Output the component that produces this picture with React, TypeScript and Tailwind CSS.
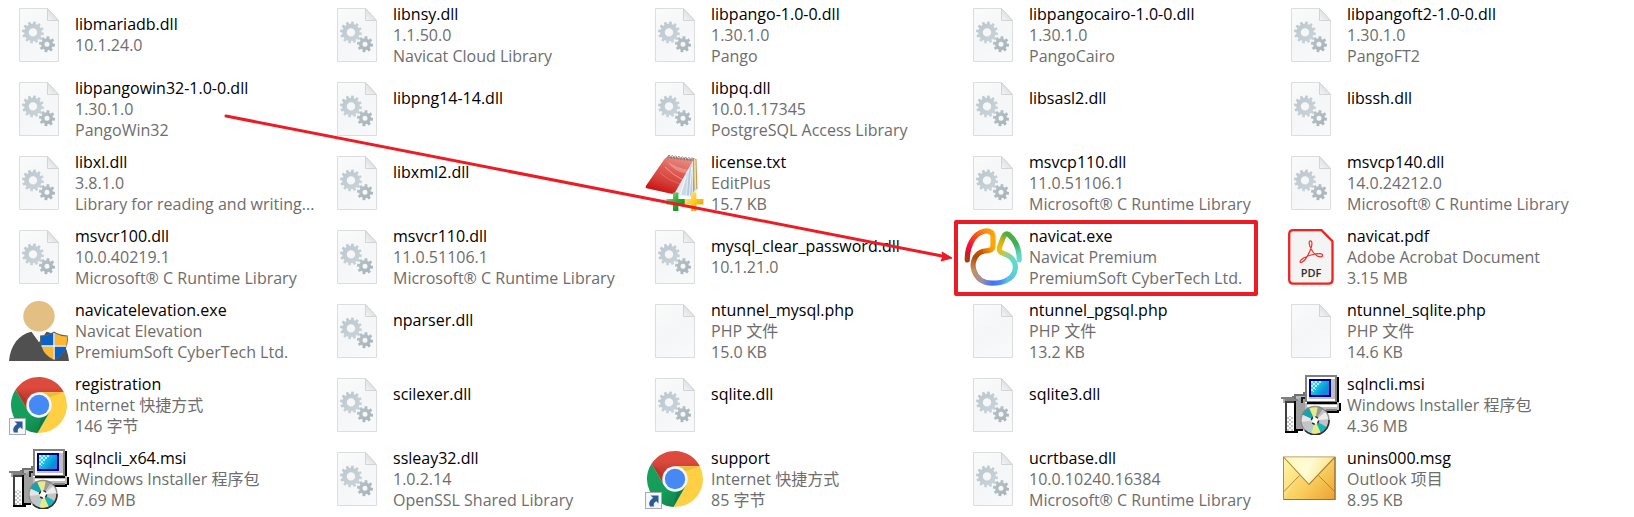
import type { ReactNode } from "react";

type IconKind = "dll" | "page" | "license" | "navicat" | "pdf" | "user" | "chrome" | "msi" | "mail";

interface FileEntry {
  name: string;
  icon: IconKind;
  meta?: string[];
  marked?: boolean;
}

const files: FileEntry[] = [
  { name: "libmariadb.dll", icon: "dll", meta: ["10.1.24.0"] },
  { name: "libnsy.dll", icon: "dll", meta: ["1.1.50.0", "Navicat Cloud Library"] },
  { name: "libpango-1.0-0.dll", icon: "dll", meta: ["1.30.1.0", "Pango"] },
  { name: "libpangocairo-1.0-0.dll", icon: "dll", meta: ["1.30.1.0", "PangoCairo"] },
  { name: "libpangoft2-1.0-0.dll", icon: "dll", meta: ["1.30.1.0", "PangoFT2"] },
  { name: "libpangowin32-1.0-0.dll", icon: "dll", meta: ["1.30.1.0", "PangoWin32"] },
  { name: "libpng14-14.dll", icon: "dll" },
  { name: "libpq.dll", icon: "dll", meta: ["10.0.1.17345", "PostgreSQL Access Library"] },
  { name: "libsasl2.dll", icon: "dll" },
  { name: "libssh.dll", icon: "dll" },
  { name: "libxl.dll", icon: "dll", meta: ["3.8.1.0", "Library for reading and writing..."] },
  { name: "libxml2.dll", icon: "dll" },
  { name: "license.txt", icon: "license", meta: ["EditPlus", "15.7 KB"] },
  { name: "msvcp110.dll", icon: "dll", meta: ["11.0.51106.1", "Microsoft® C Runtime Library"] },
  { name: "msvcp140.dll", icon: "dll", meta: ["14.0.24212.0", "Microsoft® C Runtime Library"] },
  { name: "msvcr100.dll", icon: "dll", meta: ["10.0.40219.1", "Microsoft® C Runtime Library"] },
  { name: "msvcr110.dll", icon: "dll", meta: ["11.0.51106.1", "Microsoft® C Runtime Library"] },
  { name: "mysql_clear_password.dll", icon: "dll", meta: ["10.1.21.0"] },
  { name: "navicat.exe", icon: "navicat", meta: ["Navicat Premium", "PremiumSoft CyberTech Ltd."], marked: true },
  { name: "navicat.pdf", icon: "pdf", meta: ["Adobe Acrobat Document", "3.15 MB"] },
  { name: "navicatelevation.exe", icon: "user", meta: ["Navicat Elevation", "PremiumSoft CyberTech Ltd."] },
  { name: "nparser.dll", icon: "dll" },
  { name: "ntunnel_mysql.php", icon: "page", meta: ["PHP 文件", "15.0 KB"] },
  { name: "ntunnel_pgsql.php", icon: "page", meta: ["PHP 文件", "13.2 KB"] },
  { name: "ntunnel_sqlite.php", icon: "page", meta: ["PHP 文件", "14.6 KB"] },
  { name: "registration", icon: "chrome", meta: ["Internet 快捷方式", "146 字节"] },
  { name: "scilexer.dll", icon: "dll" },
  { name: "sqlite.dll", icon: "dll" },
  { name: "sqlite3.dll", icon: "dll" },
  { name: "sqlncli.msi", icon: "msi", meta: ["Windows Installer 程序包", "4.36 MB"] },
  { name: "sqlncli_x64.msi", icon: "msi", meta: ["Windows Installer 程序包", "7.69 MB"] },
  { name: "ssleay32.dll", icon: "dll", meta: ["1.0.2.14", "OpenSSL Shared Library"] },
  { name: "support", icon: "chrome", meta: ["Internet 快捷方式", "85 字节"] },
  { name: "ucrtbase.dll", icon: "dll", meta: ["10.0.10240.16384", "Microsoft® C Runtime Library"] },
  { name: "unins000.msg", icon: "mail", meta: ["Outlook 项目", "8.95 KB"] },
];

function gearPath(cx: number, cy: number, outer: number, body: number, hole: number, teeth: number) {
  const points: string[] = [];
  const step = (Math.PI * 2) / teeth;
  const at = (angle: number, radius: number) =>
    `${(cx + Math.cos(angle) * radius).toFixed(2)} ${(cy + Math.sin(angle) * radius).toFixed(2)}`;
  for (let i = 0; i < teeth; i++) {
    const a = i * step - Math.PI / 2 + 0.15;
    points.push(at(a - step * 0.32, body), at(a - step * 0.22, outer), at(a + step * 0.22, outer), at(a + step * 0.32, body));
  }
  return `M${points.join("L")}ZM${cx - hole} ${cy}a${hole} ${hole} 0 1 0 ${hole * 2} 0a${hole} ${hole} 0 1 0 ${-hole * 2} 0Z`;
}

const bigGear = gearPath(24, 27.4, 11, 8.7, 4.2, 12);
const smallGear = gearPath(38, 39.2, 8.1, 5.9, 2.5, 8);

function PageShape() {
  return (
    <>
      <path d="M10.5 3.5H38.5L49.5 15.5V56.5H10.5Z" fill="url(#page-fill)" stroke="#dcdddd" />
      <path d="M38.5 3.5V15.5H49.5Z" fill="url(#fold-fill)" stroke="#d2d4d5" strokeLinejoin="round" />
    </>
  );
}

function DllIcon() {
  return (
    <>
      <PageShape />
      <path d={bigGear} fill="url(#gear-light)" fillRule="evenodd" />
      <path d={smallGear} fill="url(#gear-dark)" fillRule="evenodd" />
    </>
  );
}

function LicenseIcon() {
  return (
    <>
      <path d="M3 35L30 41.5L46 44L52 38L46 36Z" fill="#d9dcdf" opacity="0.6" />
      <path d="M47.5 5L51.5 6L52.5 36L49 37.5Z" fill="#c79a4b" />
      <path d="M49 6L50.5 6.4L51.3 36.4L49.6 37Z" fill="#f3e2b8" />
      <path d="M47 6L49.5 37L45 43L30 40Z" fill="#dde8f1" />
      <path d="M46.5 11L47 42.5L42 42L44 18Z" fill="#b4c9d9" />
      <path d="M43 17L40.5 42L36.5 41.5Z" fill="#c8d8e5" />
      <path d="M48 8L49.5 37L48 40Z" fill="#8fa5b5" />
      <path d="M46.5 14L44.5 42.5M41 23L35.5 41" stroke="#ffffff" strokeWidth="0.8" />
      <path d="M22.3 3.5L48 6.5Q47 10 45 13L30 39.5Q29 41.2 26.5 40.7L1.5 35.3Q0 34.8 0.8 33L19.5 6Z" fill="url(#book-red)" />
      <path d="M22 8Q29 19 43 21L45 17Q31 15 22 8Z" fill="#ffffff" opacity="0.25" />
      <path d="M20 14Q28 22 38 27" stroke="#ffffff" strokeWidth="0.8" opacity="0.5" fill="none" />
      <path d="M15 20Q23 27 35 31" stroke="#ffffff" strokeWidth="0.5" opacity="0.4" fill="none" />
      <path
        d="M23 5.5V3q1-2 2 0v2M26.3 5.9V3.4q1-2 2 0v2M29.6 6.3V3.8q1-2 2 0v2M32.9 6.7V4.2q1-2 2 0v2M36.2 7.1V4.6q1-2 2 0v2M39.5 7.5V5q1-2 2 0v2M42.8 7.9V5.4q1-2 2 0v2M46 8V5.7q1-2 2 0v2"
        fill="none"
        stroke="#77716c"
        strokeWidth="0.9"
      />
      <path d="M28 39.5h5.4v6.6h6.5v5.3h-6.5V58H28v-6.6h-6.6v-5.3H28Z" fill="url(#plus-green)" />
      <path d="M46 39.5h5.4v6.6h7V51.4h-7V58H46v-6.6h-6.2v-5.3H46Z" fill="url(#plus-gold)" />
    </>
  );
}

function NavicatIcon() {
  return (
    <g fill="none" strokeWidth="5.2">
      <path d="M44.5 52.8C51 49 54 42 51.5 35.5C49.5 30 45 28 41 26.7" stroke="url(#nav-teal)" />
      <path d="M41.3 26.8C36.5 25.6 35.6 23.3 36.5 20L40 11C42 6 44.3 6.2 46.5 8.3" stroke="url(#nav-yellow)" />
      <path d="M46.2 8C52.5 13.5 56.5 21.5 56.2 33" stroke="url(#nav-green)" strokeLinecap="round" />
      <path d="M11 43.5C13.5 51 19.5 56 29 56.2C35.5 56.2 40.5 55.3 44.8 52.6" stroke="url(#nav-blue)" />
      <path d="M20.5 24.2C12.5 26 8 35.5 11.1 43.8" stroke="url(#nav-brown)" />
      <path d="M28 5.2Q30 6.8 30 10V18.5C30 21.5 29 22.8 26.5 23.2L20.2 24.3" stroke="url(#nav-orange)" />
      <path d="M4.3 33C4 20 10 6.8 21 4.2Q25.8 3.3 28.3 5.5" stroke="url(#nav-red)" strokeLinecap="round" />
    </g>
  );
}

function PdfIcon() {
  return (
    <>
      <path
        d="M12.2 3.2H40.5L51.5 14.2V52.5Q51.5 56.6 47.4 56.6H12.2Q8.2 56.6 8.2 52.5V7.2Q8.2 3.2 12.2 3.2Z"
        fill="#f4f4f4"
        stroke="#f4221b"
        strokeWidth="2.3"
      />
      <path
        d="M29.3 13.9C27.4 13.9 28 18.2 30.2 22.2C32.5 26.2 36.5 29.8 39.6 29.8C42.5 29.8 42.3 26.7 38.8 26.7C34 26.7 26 28.6 21.8 31.6C18.3 34 18.6 35.8 20.2 35.5C23.6 35 28.6 26.2 30.3 20.2C31.4 16.2 31 13.9 29.3 13.9Z"
        fill="none"
        stroke="#f0302a"
        strokeWidth="1.2"
      />
      <text x="30" y="50" textAnchor="middle" className="fill-[#2c2c2c] font-['Open_Sans'] text-[11px] font-semibold">
        PDF
      </text>
    </>
  );
}

function UserIcon() {
  return (
    <>
      <path d="M0 60C1.5 44 10 33.5 22.5 30.8L30 41L37.5 30.8C50 33.5 58.5 44 60 60Z" fill="#505050" />
      <path d="M23 27H37V31L30 41L23 31Z" fill="#f7f7f7" />
      <ellipse cx="30" cy="15.2" rx="15.7" ry="15.2" fill="#e3bf83" />
      <path d="M45 30.5Q50 34 58.8 34.5Q60 52 45 59.5Q30 52 31 34.5Q40 34 45 30.5Z" fill="#5b6670" />
      <path d="M44.2 32.2V44.2H32.6Q31.8 40 32 35.5Q39 35.2 44.2 32.2Z" fill="#0a63c4" />
      <path d="M45.8 32.2V44.2H57.4Q58.2 40 58 35.5Q51 35.2 45.8 32.2Z" fill="#fdb731" />
      <path d="M44.2 45.8V58.2Q35 54 32.9 45.8Z" fill="#fdb731" />
      <path d="M45.8 45.8V58.2Q55 54 57.1 45.8Z" fill="#0a63c4" />
      <path d="M45 32V58.5M32.5 45H57.5" stroke="#f2f4f6" strokeWidth="1.5" />
    </>
  );
}

function ChromeIcon() {
  return (
    <>
      <path d="M6.5 14.7A28 28 0 0 1 54.9 17.3H30L19 36.3Z" fill="url(#chrome-red)" />
      <path d="M54.9 17.3A28 28 0 0 1 28.5 58L41 36.3L30 17.3Z" fill="#ffcf44" />
      <path d="M28.5 58A28 28 0 0 1 6.5 14.7L19 36.3H41Z" fill="url(#chrome-green)" />
      <path d="M30 17.3H54.9L41 22Z" fill="#c99526" opacity="0.35" />
      <path d="M6.5 14.7L19 36.3L17.5 24Z" fill="#8f2b1f" opacity="0.3" />
      <path d="M41 36.3L28.5 58L32 42Z" fill="#0a5a34" opacity="0.3" />
      <circle cx="30" cy="30" r="12.7" fill="#f4f6f8" />
      <circle cx="30" cy="30" r="10.2" fill="#4688f4" />
      <rect x="0.5" y="43.5" width="16" height="16" fill="#f5f6f7" stroke="#a9abad" />
      <path d="M5.5 46.5H13.5V54.5L11.3 52.2C9 53.2 8.3 55 9 57.5H5C3.2 54.3 4.8 51 8.2 49.1Z" fill="#2b5b96" />
    </>
  );
}

function MsiIcon() {
  return (
    <>
      <g shapeRendering="crispEdges">
        {/* carton */}
        <path d="M13 20H24V54H11V25Z" fill="#a0a0a0" />
        <path d="M13 19H22V17H26V23H18V25H11V21H13Z" fill="#707070" />
        <path d="M15 21H26V23H18V25H15Z" fill="#b8b8b8" />
        <path d="M0 22H13V24H17V26H4V24H0Z" fill="#808080" />
        <path d="M2 24H4V26H15V28H2Z" fill="#a8a8a8" />
        <rect x="4" y="26" width="10" height="32" fill="#ffffff" />
        <path d="M4 26H13V28H6V58H4Z" fill="#404040" />
        <rect x="6" y="41" width="6" height="15" fill="url(#msi-dither)" />
        <path d="M13 26H15V58H4V56H13Z" fill="#000000" />
        <path d="M15 54H22V56H17V58H15Z" fill="#000000" />
        <path d="M20 22H24V24H22V28H20Z" fill="#202020" />
        {/* computer */}
        <path d="M24 28H60V36H58V38H45V36H24Z" fill="#000000" />
        <path d="M24 28H56V26H58V35H24Z" fill="#bcbcbc" />
        <path d="M26 30H56V32H26Z" fill="#ffffff" />
        <path d="M45 34H56V36H45Z" fill="#808080" />
        <path d="M26 2H58V27H56V29H26Z" fill="#000000" />
        <rect x="24" y="0" width="32" height="27" fill="#808080" />
        <rect x="26" y="2" width="28" height="24" fill="#ffffff" />
        <path d="M28 22H50V4H54V24H28Z" fill="#c0c0c0" />
        <rect x="28" y="4" width="22" height="18" fill="#000080" />
        <rect x="30" y="6" width="18" height="14" fill="url(#msi-screen)" />
        <path d="M30 6H41L32 18H30Z" fill="url(#msi-dither-cyan)" />
      </g>
      {/* disc */}
      <circle cx="34" cy="45.5" r="14.3" fill="#c4c4c4" />
      <path d="M34 45.5L21 39.5A14.3 14.3 0 0 1 28 32.5Z" fill="#13a5ae" />
      <path d="M34 45.5L28 32.5A14.3 14.3 0 0 1 37 31.5Z" fill="#e9e98a" />
      <path d="M34 45.5L37 31.5A14.3 14.3 0 0 1 42 33.7Z" fill="#9a9a9a" />
      <path d="M34 45.5L45 36.5A14.3 14.3 0 0 1 48.2 44Z" fill="#ededed" />
      <path d="M34 45.5L46.5 52.5A14.3 14.3 0 0 1 40 58.5Z" fill="#13b5bd" />
      <path d="M34 45.5L40 58.5A14.3 14.3 0 0 1 30 59.2Z" fill="#e9e98a" />
      <path d="M34 45.5L30 59.2A14.3 14.3 0 0 1 26 57.3Z" fill="#9fd7d9" />
      <path d="M34 45.5L19.8 47A14.3 14.3 0 0 1 21 39.5Z" fill="#e4e4e4" />
      <circle cx="34" cy="45.5" r="14" fill="none" stroke="#808080" strokeWidth="1.4" opacity="0.8" />
      <path d="M48 45A14 14 0 0 1 24 55.5" fill="none" stroke="#303030" strokeWidth="1.6" />
      <circle cx="34" cy="45.5" r="3.6" fill="#ffffff" stroke="#222222" strokeWidth="1.4" strokeDasharray="3 2.6" />
    </>
  );
}

function MailIcon() {
  return (
    <>
      <rect x="2.5" y="8" width="51.5" height="42.5" fill="url(#mail-fill)" stroke="#b08c46" />
      <path d="M3 49.5L18.5 26.5L28 36L37.5 26.5L53.5 49.5Z" fill="#f0ad38" opacity="0.15" />
      <path d="M3 42.5L18.5 26.5M53.5 42.5L37.5 26.5" stroke="#a87f3a" strokeWidth="0.9" />
      <path d="M3 8.5L28 35.5L53.5 8.5Z" fill="url(#mail-flap)" />
      <path d="M3 8.5L28 35.5L53.5 8.5" fill="none" stroke="#ab8236" strokeWidth="1.1" />
      <path d="M3 50.5H54V8" fill="none" stroke="#96723a" strokeWidth="1.2" />
    </>
  );
}

const drawings: Record<IconKind, () => ReactNode> = {
  dll: DllIcon,
  page: PageShape,
  license: LicenseIcon,
  navicat: NavicatIcon,
  pdf: PdfIcon,
  user: UserIcon,
  chrome: ChromeIcon,
  msi: MsiIcon,
  mail: MailIcon,
};

function FileIcon({ kind }: { kind: IconKind }) {
  const Drawing = drawings[kind];
  return (
    <svg viewBox="0 0 60 60" className="size-15 shrink-0" aria-hidden="true">
      <Drawing />
    </svg>
  );
}

type Stop = [number, string];

function Gradient({ id, from, to, stops }: { id: string; from: [number, number]; to: [number, number]; stops: Stop[] }) {
  return (
    <linearGradient id={id} gradientUnits="userSpaceOnUse" x1={from[0]} y1={from[1]} x2={to[0]} y2={to[1]}>
      {stops.map(([offset, color]) => (
        <stop key={offset} offset={offset} stopColor={color} />
      ))}
    </linearGradient>
  );
}

function SharedPaint() {
  return (
    <svg className="absolute size-0" aria-hidden="true">
      <defs>
        <Gradient id="page-fill" from={[10, 3]} to={[50, 57]} stops={[[0, "#fafbfb"], [0.5, "#f4f6f7"], [1, "#f9fafb"]]} />
        <Gradient id="fold-fill" from={[38, 15]} to={[44, 9]} stops={[[0, "#f6f6f6"], [1, "#dfe1e2"]]} />
        <Gradient id="gear-light" from={[16, 18]} to={[32, 38]} stops={[[0, "#bcc7cf"], [1, "#cbd4da"]]} />
        <Gradient id="gear-dark" from={[32, 32]} to={[44, 46]} stops={[[0, "#b6c1c8"], [1, "#a7b2b9"]]} />
        <Gradient id="book-red" from={[32, 4]} to={[20, 40]} stops={[[0, "#e88a80"], [0.4, "#df5a51"], [0.75, "#d23a34"], [1, "#cc1512"]]} />
        <Gradient id="plus-green" from={[22, 42]} to={[38, 56]} stops={[[0, "#8fd98f"], [0.5, "#2fae37"], [1, "#0d8a17"]]} />
        <Gradient id="plus-gold" from={[41, 42]} to={[57, 56]} stops={[[0, "#ffe680"], [0.5, "#fbc91d"], [1, "#e09c00"]]} />
        <Gradient id="nav-red" from={[4, 33]} to={[28, 4]} stops={[[0, "#a83c10"], [0.15, "#d01828"], [0.35, "#f8103c"], [0.6, "#f24a1c"], [1, "#ffa305"]]} />
        <Gradient id="nav-orange" from={[30, 16]} to={[20, 25]} stops={[[0, "#ffa805"], [0.4, "#f59c08"], [1, "#cf6203"]]} />
        <Gradient id="nav-brown" from={[20, 24]} to={[11, 44]} stops={[[0, "#c85a02"], [0.4, "#b04a05"], [1, "#c3925f"]]} />
        <Gradient id="nav-blue" from={[11, 44]} to={[45, 53]} stops={[[0, "#c3925f"], [0.3, "#9a8fa8"], [0.6, "#3f72fa"], [0.8, "#4a86fb"], [1, "#5abfe0"]]} />
        <Gradient id="nav-teal" from={[45, 53]} to={[41, 26]} stops={[[0, "#5abfe0"], [0.3, "#5dd8d2"], [0.7, "#60dac8"], [1, "#a5cd6a"]]} />
        <Gradient id="nav-yellow" from={[39, 27]} to={[47, 8]} stops={[[0, "#c8c63c"], [0.25, "#f3b905"], [0.6, "#c2b41c"], [1, "#4fae42"]]} />
        <Gradient id="nav-green" from={[47, 8]} to={[56, 33]} stops={[[0, "#4fae42"], [0.4, "#3fae54"], [0.75, "#5dd0b4"], [1, "#62dcd8"]]} />
        <Gradient id="chrome-red" from={[30, 2]} to={[30, 20]} stops={[[0, "#de4b3e"], [0.6, "#db4a3d"], [1, "#c63d31"]]} />
        <Gradient id="chrome-green" from={[6, 20]} to={[34, 50]} stops={[[0, "#15a05c"], [0.6, "#159d5a"], [1, "#10884d"]]} />
        <Gradient id="msi-screen" from={[30, 6]} to={[48, 20]} stops={[[0, "#5fe4f2"], [0.45, "#10b6e6"], [0.75, "#078ed6"], [1, "#3a6cf4"]]} />
        <Gradient id="mail-fill" from={[6, 10]} to={[52, 50]} stops={[[0, "#fff3a6"], [0.5, "#fbd768"], [1, "#eda233"]]} />
        <Gradient id="mail-flap" from={[8, 8]} to={[48, 26]} stops={[[0, "#fff9bd"], [0.5, "#fffbd8"], [1, "#fbe282"]]} />
        <pattern id="msi-dither" width="4" height="4" patternUnits="userSpaceOnUse">
          <path d="M0 0H2V2H0ZM2 2H4V4H2Z" fill="#c6c6c6" />
        </pattern>
        <pattern id="msi-dither-cyan" width="4" height="4" patternUnits="userSpaceOnUse">
          <path d="M0 0H2V2H0ZM2 2H4V4H2Z" fill="#b5f6fa" />
        </pattern>
      </defs>
    </svg>
  );
}

function FileTile({ file }: { file: FileEntry }) {
  return (
    <li className="relative flex h-[74px] items-center gap-1.5 pb-1">
      <FileIcon kind={file.icon} />
      <div className="min-h-[42px] min-w-0 text-base leading-[21px] whitespace-nowrap">
        <p className="text-black">{file.name}</p>
        {file.meta?.map((line) => (
          <p key={line} className="text-[#6d6d6d]">
            {line}
          </p>
        ))}
      </div>
      {file.marked && (
        <span className="absolute -top-0.5 right-[23px] bottom-0 -left-[9px] rounded-xs border-4 border-[#ed1c24]" />
      )}
    </li>
  );
}

export default function App() {
  return (
    <main className="relative h-screen overflow-hidden bg-white font-['Open_Sans','Noto_Sans_CJK_SC',sans-serif]">
      <SharedPaint />
      <ul className="grid grid-cols-5 pr-[35px] pl-[9px]">
        {files.map((file) => (
          <FileTile key={file.name} file={file} />
        ))}
      </ul>
      <svg className="pointer-events-none absolute inset-0 size-full" aria-hidden="true">
        <path d="M226 116L942 256" stroke="#ed1c24" strokeWidth="3" strokeLinecap="round" />
        <path d="M952 258L941 261L943 256.5L942 252Z" fill="#ed1c24" stroke="#ed1c24" strokeLinejoin="round" />
      </svg>
    </main>
  );
}
